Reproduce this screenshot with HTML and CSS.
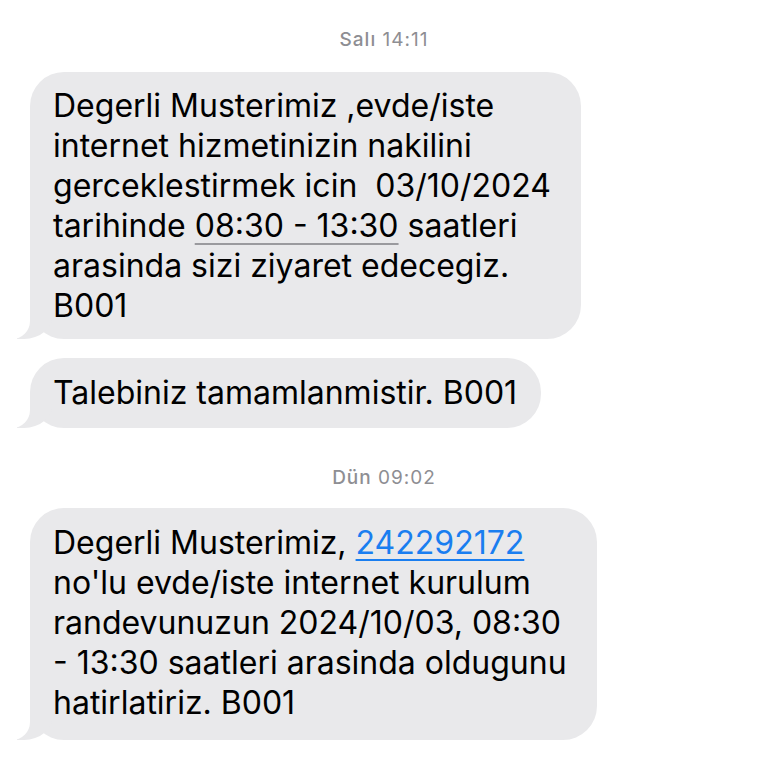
FILE: index.html
```html
<!DOCTYPE html>
<html lang="tr">
<head>
<meta charset="utf-8">
<link rel="stylesheet" href="styles.css">
</head>
<body>
<div class="thread">
  <div class="stamp"><span class="day">Salı</span> 14:11</div>
  <div class="bubble b1">Degerli Musterimiz ,evde/iste<br>internet hizmetinizin nakilini<br>gerceklestirmek icin&nbsp; 03/10/2024<br>tarihinde <span class="detect">08:30 - 13:30</span> saatleri<br>arasinda sizi ziyaret edecegiz.<br>B001</div>
  <div class="bubble b2">Talebiniz tamamlanmistir. B001</div>
  <div class="stamp stamp2"><span class="day">Dün</span> 09:02</div>
  <div class="bubble b3">Degerli Musterimiz, <span class="link">242292172</span><br>no'lu evde/iste internet kurulum<br>randevunuzun 2024/10/03, 08:30<br>- 13:30 saatleri arasinda oldugunu<br>hatirlatiriz. B001</div>
</div>
</body>
</html>
```
FILE: styles.css
```css
html, body {
  margin: 0;
  padding: 0;
  background: #ffffff;
}
body {
  width: 768px;
  height: 768px;
  overflow: hidden;
  font-family: Inter, "Noto Sans", sans-serif;
}
.thread {
  display: flex;
  flex-direction: column;
  align-items: flex-start;
  padding: 28px 0 0 30px;
}
.stamp {
  align-self: stretch;
  margin-left: -30px;
  text-align: center;
  font-size: 19px;
  letter-spacing: 1px;
  line-height: 24px;
  color: #8e8e93;
  margin-bottom: 20px;
}
.stamp .day {
  font-weight: 500;
}
.stamp2 {
  margin-top: 38px;
  margin-bottom: 18px;
}
.bubble {
  position: relative;
  background: #e9e9eb;
  color: #000;
  font-size: 32px;
  line-height: 40px;
  padding: 14px 30px 13px 23px;
  border-radius: 34px;
}
.bubble::before {
  content: "";
  position: absolute;
  left: -13px;
  bottom: 0;
  height: 36px;
  border-left: 36px solid #e9e9eb;
  border-bottom-right-radius: 29px 25px;
}
.bubble::after {
  content: "";
  position: absolute;
  left: -47px;
  bottom: 0;
  width: 47px;
  height: 36px;
  background: #ffffff;
  border-bottom-right-radius: 18px;
}
.b2 {
  margin-top: 19px;
  padding-top: 15px;
  padding-bottom: 15px;
  padding-right: 24px;
}
.b3 {
  padding-top: 15px;
  padding-bottom: 17px;
}
.detect {
  text-decoration: underline;
  text-decoration-color: #9a9a9e;
  text-decoration-thickness: 2px;
  text-underline-offset: 6px;
}
.link {
  color: #1a7ef0;
  text-decoration: underline;
  text-decoration-thickness: 2px;
  text-underline-offset: 5px;
}
```
